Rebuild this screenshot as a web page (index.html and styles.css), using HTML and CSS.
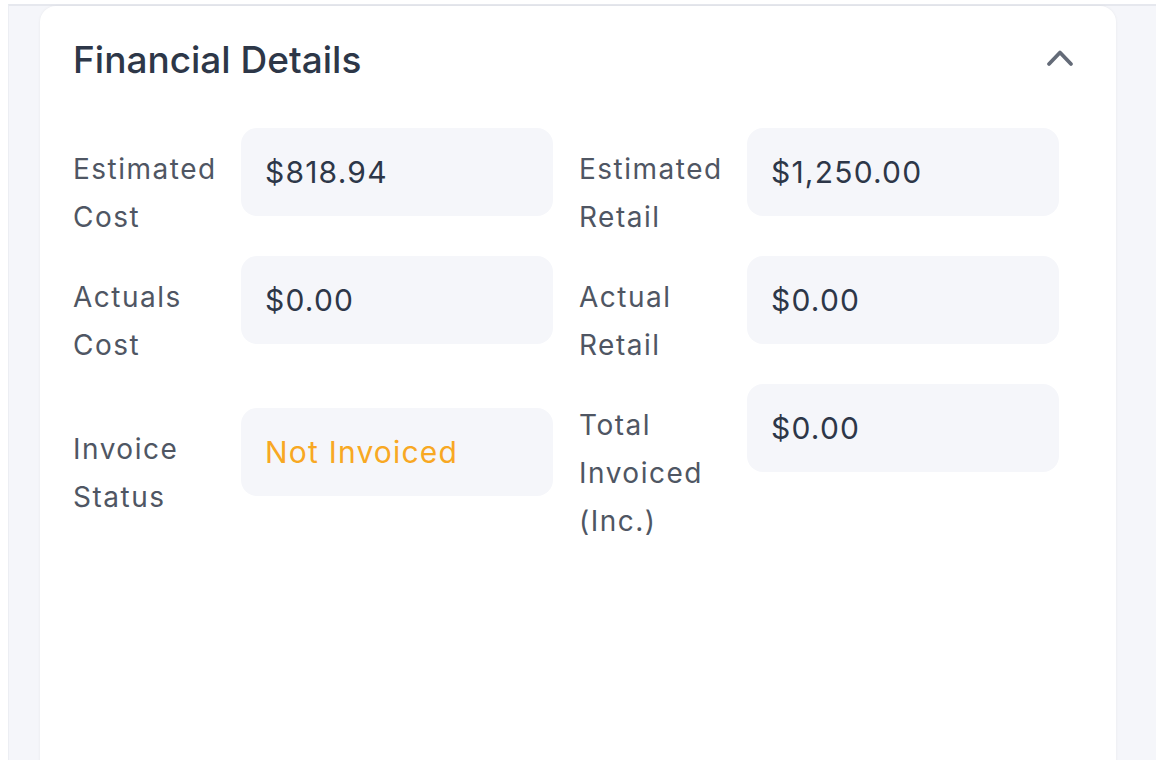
FILE: index.html
```html
<!DOCTYPE html>
<html lang="en">
<head>
    <meta charset="UTF-8">
    <meta name="viewport" content="width=device-width, initial-scale=1.0">
    <title>Financial Details</title>
    <link rel="stylesheet" href="styles.css">
</head>
<body>
    <div class="panel">
        <div class="card">
            <!-- Header -->
            <div class="card-header">
                <h2>Financial Details</h2>
                <svg class="chevron" width="36" height="36" viewBox="0 0 36 36">
                    <polyline points="7,24 18,12.5 29,24" fill="none" stroke="#646b78" stroke-width="3.8" stroke-linecap="round" stroke-linejoin="round"/>
                </svg>
            </div>

            <!-- Fields -->
            <div class="fields">
                <div class="field">
                    <div class="label">Estimated Cost</div>
                    <div class="value">$818.94</div>
                </div>
                <div class="field">
                    <div class="label">Estimated Retail</div>
                    <div class="value">$1,250.00</div>
                </div>
                <div class="field">
                    <div class="label">Actuals Cost</div>
                    <div class="value">$0.00</div>
                </div>
                <div class="field">
                    <div class="label">Actual Retail</div>
                    <div class="value">$0.00</div>
                </div>
                <div class="field">
                    <div class="label">Invoice Status</div>
                    <div class="value status">Not Invoiced</div>
                </div>
                <div class="field">
                    <div class="label">Total Invoiced (Inc.)</div>
                    <div class="value">$0.00</div>
                </div>
            </div>
        </div>
    </div>
</body>
</html>
```

FILE: styles.css
```css
html, body {
    margin: 0;
    height: 100%;
    overflow: hidden;
}

body {
    font-family: Inter, "Noto Sans", sans-serif;
    background-color: white;
    padding-top: 4px;
    box-sizing: border-box;
}

.panel {
    margin-left: 8px;
    height: 100%;
    background-color: #f5f6fa;
    border-top: 2px solid #e6e8ee;
    border-left: 1px solid #eceef3;
    padding: 0 40px 0 31px;
}

.card {
    height: 100%;
    background-color: white;
    border-radius: 16px 16px 0 0;
    box-shadow: 0 0 3px rgba(0,0,0,0.06);
    padding: 0 32px 0 33px;
}

.card-header {
    display: flex;
    justify-content: space-between;
    align-items: center;
    height: 104px;
    padding-right: 6px;
}

.card-header h2 {
    margin: 0;
    font-size: 37px;
    font-weight: 500;
    color: #2d3748;
    position: relative;
    top: 1px;
}

.chevron {
    display: block;
}

.fields {
    display: grid;
    grid-template-columns: 480px 480px;
    column-gap: 26px;
    align-items: center;
    margin-top: 18px;
}

.field {
    display: flex;
    align-items: flex-start;
}

.label {
    width: 168px;
    padding: 17px 0 15px;
    font-size: 28px;
    line-height: 48px;
    letter-spacing: 1.5px;
    color: #4f5663;
}

.value {
    display: flex;
    align-items: center;
    width: 312px;
    height: 88px;
    padding: 0 24px;
    box-sizing: border-box;
    background-color: #f5f6fa;
    border-radius: 16px;
    font-size: 30px;
    letter-spacing: 1.2px;
    color: #2d3748;
}

.status {
    color: #f8a823;
}
```
